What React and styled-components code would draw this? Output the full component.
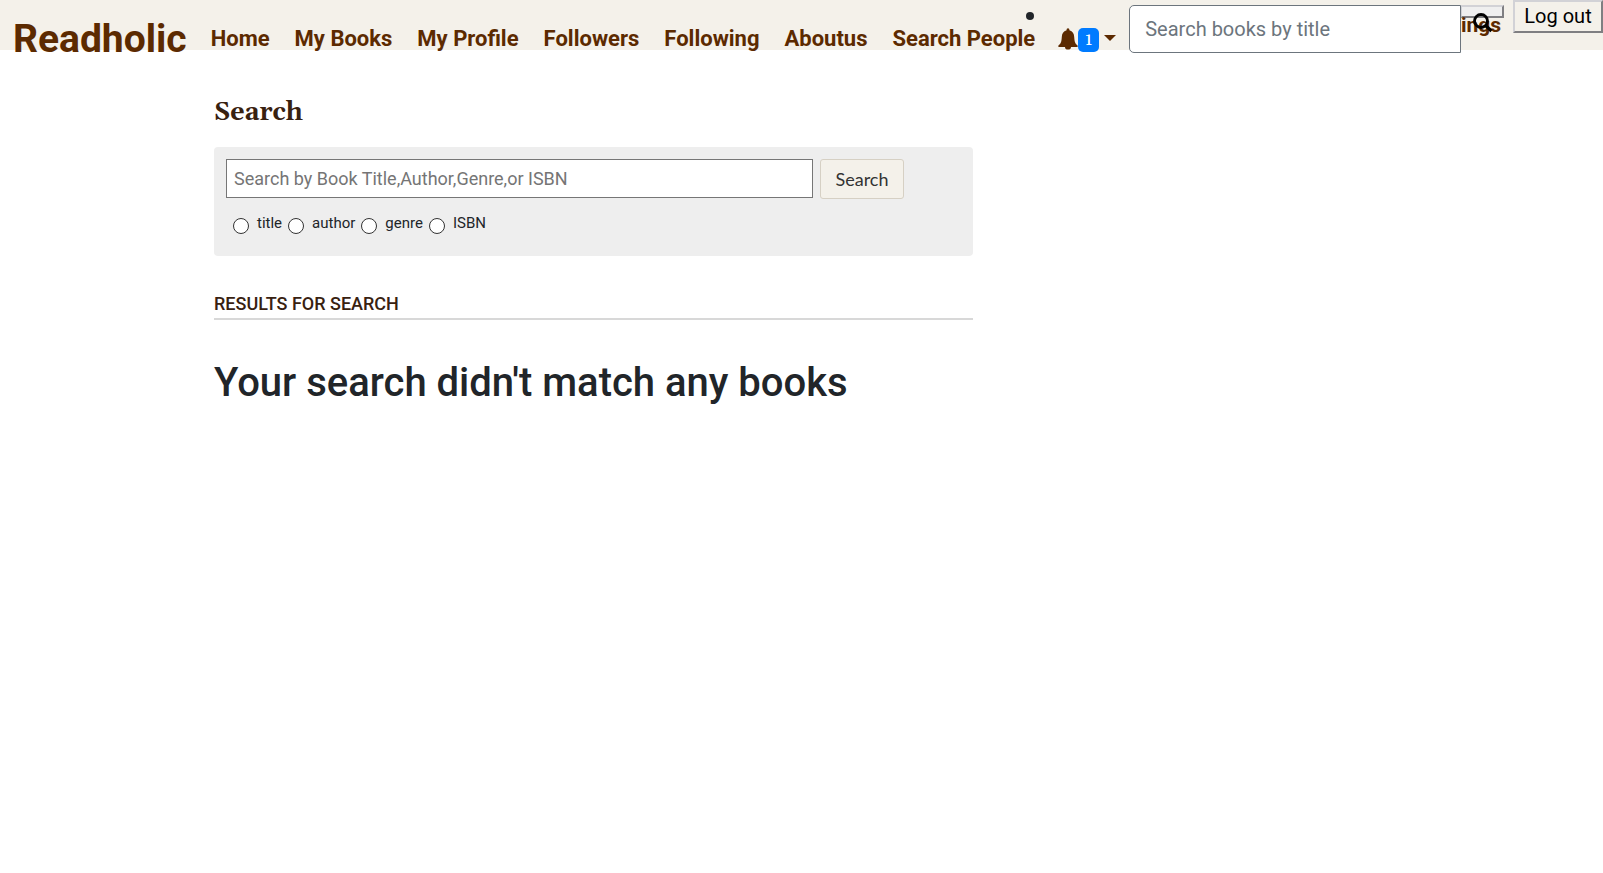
import React from 'react';
import styled, { createGlobalStyle } from 'styled-components';

const GlobalStyle = createGlobalStyle`
  *, *::before, *::after { box-sizing: border-box; }
  body {
    margin: 0;
    background: #fff;
    color: #212529;
    font-family: Roboto, "Liberation Sans", sans-serif;
    font-size: 16px;
    line-height: 24px;
  }
  input, button { font-family: inherit; }
`;

const Header = styled.header`
  display: flex;
  align-items: flex-start;
  height: 50px;
  background: #f4f1ea;
  color: #5c2a00;
  white-space: nowrap;
`;

const Nav = styled.nav`
  display: flex;
  align-items: flex-start;
  gap: 24px;
  padding: 15px 0 0 13px;
`;

const Links = styled.div`
  display: flex;
  gap: 25px;
`;

const Brand = styled.a`
  color: inherit;
  font-size: 39px;
  font-weight: 700;
  line-height: 48px;
  text-decoration: none;
`;

const NavLink = styled.a`
  padding-top: 8px;
  color: inherit;
  font-size: 22px;
  font-weight: 700;
  line-height: 32px;
  text-decoration: none;
`;

const Notifications = styled.div`
  position: relative;
  margin-left: 23px;
  padding-top: 28px;
`;

const Bullet = styled.span`
  position: absolute;
  top: 12px;
  left: -32px;
  width: 8px;
  height: 8px;
  border-radius: 50%;
  background: #212529;
`;

const BellButton = styled.button`
  display: flex;
  align-items: flex-start;
  height: 24px;
  padding: 0;
  border: 0;
  background: none;
  color: inherit;

  &::after {
    content: "";
    margin: 7px 0 0 5px;
    border: 6px solid transparent;
    border-top-color: currentColor;
    border-bottom: 0;
  }
`;

const Badge = styled.span`
  width: 21px;
  height: 24px;
  border-radius: 5px;
  background: #007bff;
  color: #fff;
  font: 400 18px/24px Gelasio, Georgia, "DejaVu Serif", "Liberation Serif", serif;
  text-align: center;
`;

const BookSearch = styled.form`
  display: flex;
  flex: 1;
  align-items: flex-start;
  padding: 5px 0 0 13px;
`;

const BookInput = styled.input`
  flex: 1;
  min-width: 0;
  height: 48px;
  padding: 8px 15px;
  border: 1px solid #6c757d;
  border-radius: 5px 0 0 5px;
  background: #fff;
  color: #495057;
  font-size: 20px;
  line-height: 30px;
  &::placeholder { color: #6c757d; opacity: 1; }
`;

const Tools = styled.div`
  position: relative;
  width: 43px;
  margin-right: 9px;
  padding-top: 5px;
`;

const IconButton = styled.button`
  display: block;
  width: 43px;
  height: 13px;
  padding: 0;
  border: 2px outset #d2d2d6;
  border-left-width: 1px;
  background: #efefef;
  color: #000;
`;

const SettingsLink = styled.a`
  position: absolute;
  top: 11px;
  right: 3px;
  color: #5c2a00;
  font-size: 21px;
  font-weight: 700;
  line-height: 28px;
  text-decoration: none;
`;

const SearchIcon = styled.svg`
  position: absolute;
  top: 13px;
  left: 12px;
`;

const Logout = styled.button`
  width: 90px;
  height: 33px;
  padding: 0 0 2px;
  border: 2px outset #d2d2d6;
  background: #f4f1ea;
  color: #000;
  font-size: 20px;
  line-height: 24px;
`;

const Page = styled.div`
  max-width: 1175px;
  margin: 0 auto;
`;

const Main = styled.main`
  max-width: 759px;
`;

const Title = styled.h1`
  margin: 0;
  padding: 47px 0 18px;
  color: #382110;
  font: 700 25px/32px Gelasio, Georgia, "Liberation Serif", serif;
`;

const Panel = styled.form`
  height: 109px;
  padding: 12px;
  border-radius: 4px;
  background: #eee;
`;

const SearchRow = styled.div`
  display: flex;
  gap: 7px;
  margin-right: 57px;
`;

const SearchInput = styled.input`
  flex: 1;
  min-width: 0;
  height: 39px;
  padding: 0 7px;
  border: 1px solid #767676;
  border-radius: 0;
  font-size: 18px;
  &::placeholder { color: #757575; opacity: 1; }
`;

const SearchButton = styled.button`
  width: 84px;
  height: 40px;
  padding: 0;
  border: 1px solid #d6d0c4;
  border-radius: 3px;
  background: #f4f1ea;
  color: #333;
  && { font-family: Lato, "Liberation Sans", sans-serif; }
  font-size: 18px;
`;

const Options = styled.div`
  display: flex;
  gap: 6px;
  padding: 14px 0 0 7px;
`;

const Option = styled.label`
  display: flex;
  gap: 8px;
  font-size: 15px;
  line-height: 20px;
`;

const Radio = styled.input`
  appearance: none;
  width: 16px;
  height: 16px;
  margin: 5px 0 0;
  border: 1px solid #333;
  border-radius: 50%;
  background: #fff;
  &:checked { border: 5px solid #0075ff; }
`;

const ResultsTitle = styled.h2`
  margin: 34px 0 0;
  padding: 2px 0;
  border-bottom: 2px solid #d8d8d8;
  color: #382110;
  font-size: 18px;
  font-weight: 500;
  line-height: 24px;
  text-transform: uppercase;
`;

const EmptyMessage = styled.p`
  margin: 39px 0 0;
  font-size: 40px;
  font-weight: 500;
  line-height: 48px;
`;

const links = ['Home', 'My Books', 'My Profile', 'Followers', 'Following', 'Aboutus', 'Search People'];
const fields = ['title', 'author', 'genre', 'ISBN'];

function BellIcon() {
  return (
    <svg width="20" height="22" viewBox="0 0 20 22" fill="currentColor" aria-hidden="true">
      <path d="M10 0.3C11 0.3 11.4 1 11.4 2.2C14.7 3 16 5.5 16.2 9C16.5 13.5 17 15.5 19.6 17.6V18.9H13C13 20.6 11.8 21.6 10 21.6S7 20.6 7 18.9H0.4V17.6C3 15.5 3.5 13.5 3.8 9C4 5.5 5.3 3 8.6 2.2C8.6 1 9 0.3 10 0.3Z" />
    </svg>
  );
}

export default function App() {
  return (
    <>
      <GlobalStyle />
      <Header>
        <Nav>
          <Brand href="#">Readholic</Brand>
          <Links>
            {links.map((link) => <NavLink href="#" key={link}>{link}</NavLink>)}
          </Links>
        </Nav>
        <Notifications>
          <Bullet />
          <BellButton type="button" aria-label="Notifications">
            <BellIcon />
            <Badge>1</Badge>
          </BellButton>
        </Notifications>
        <BookSearch>
          <BookInput type="text" aria-label="Search books by title" placeholder="Search books by title" />
        </BookSearch>
        <Tools>
          <IconButton type="button" aria-label="Search books" />
          <SettingsLink href="#">ings</SettingsLink>
          <SearchIcon width="20" height="20" viewBox="0 0 20 20" fill="none" stroke="#000" aria-hidden="true">
            <circle cx="8" cy="8" r="6.5" strokeWidth="2.8" />
            <path d="M12.5 12.5L18.5 18" strokeWidth="3.2" />
          </SearchIcon>
        </Tools>
        <Logout type="button">Log out</Logout>
      </Header>
      <Page>
        <Main>
          <Title>Search</Title>
          <Panel>
            <SearchRow>
              <SearchInput type="text" aria-label="Search books" placeholder="Search by Book Title,Author,Genre,or ISBN" />
              <SearchButton type="submit">Search</SearchButton>
            </SearchRow>
            <Options>
              {fields.map((field) => (
                <Option key={field}>
                  <Radio type="radio" name="field" value={field} />
                  {field}
                </Option>
              ))}
            </Options>
          </Panel>
          <ResultsTitle>Results for search</ResultsTitle>
          <EmptyMessage>Your search didn't match any books</EmptyMessage>
        </Main>
      </Page>
    </>
  );
}
